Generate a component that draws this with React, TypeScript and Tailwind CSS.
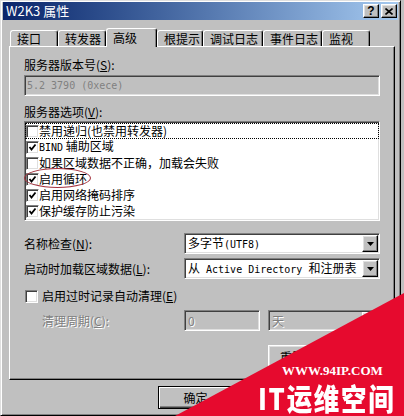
import type { ReactNode } from 'react';

const raised =
  'border border-t-white border-l-white border-r-black border-b-black shadow-[inset_-1px_-1px_0_#808080,inset_1px_1px_0_#dfdfdf]';
const sunken =
  'border border-t-[#808080] border-l-[#808080] border-r-white border-b-white shadow-[inset_1px_1px_0_#404040,inset_-1px_-1px_0_#dfdfdf]';
const mono = "font-['DejaVu_Sans_Mono',monospace] text-[10px] leading-[14px]";
const grayed = 'text-[#808080] [text-shadow:1px_1px_0_#fff]';

function Key({ k }: { k: string }) {
  return (
    <>
      (<span className="underline">{k}</span>)
    </>
  );
}

function CheckBox({ checked }: { checked: boolean }) {
  return (
    <span className={`flex h-[13px] w-[13px] shrink-0 items-center justify-center bg-white ${sunken}`}>
      {checked && (
        <svg width="9" height="9" viewBox="0 0 9 9">
          <polyline points="1.5,4 3.5,6.5 7.5,1.5" fill="none" stroke="#000" strokeWidth="1.8" />
        </svg>
      )}
    </span>
  );
}

function ArrowBtn({ disabled }: { disabled?: boolean }) {
  return (
    <span className={`flex h-[17px] w-[16px] items-center justify-center bg-[#c0c0c0] ${raised}`}>
      <svg width="7" height="4" viewBox="0 0 7 4">
        <polygon points="0,0 7,0 3.5,4" fill={disabled ? '#808080' : '#000'} />
      </svg>
    </span>
  );
}

function Combo({ children, disabled, className = '' }: { children: ReactNode; disabled?: boolean; className?: string }) {
  return (
    <div className={`flex h-[21px] items-center ${sunken} ${disabled ? 'bg-[#c0c0c0]' : 'bg-white'} ${className}`}>
      <div className={`flex-1 whitespace-nowrap pl-[3px] leading-[14px] ${disabled ? grayed : ''}`}>{children}</div>
      <div className="mr-[1px]">
        <ArrowBtn disabled={disabled} />
      </div>
    </div>
  );
}

const tabs = [
  { label: '接口', w: 'w-[48px]' },
  { label: '转发器', w: 'w-[48px]' },
  { label: '高级', w: 'w-[51px]', active: true },
  { label: '根提示', w: 'w-[46px]' },
  { label: '调试日志', w: 'w-[60px]' },
  { label: '事件日志', w: 'w-[59px]' },
  { label: '监视', w: 'w-[48px]' },
];

const options: Array<{ label: ReactNode; checked: boolean }> = [
  { label: '禁用递归(也禁用转发器)', checked: false },
  {
    label: (
      <>
        <span className={mono}>BIND</span> 辅助区域
      </>
    ),
    checked: true,
  },
  { label: '如果区域数据不正确，加载会失败', checked: false },
  { label: '启用循环', checked: true },
  { label: '启用网络掩码排序', checked: true },
  { label: '保护缓存防止污染', checked: true },
];

export default function App() {
  return (
    <div className="relative h-[416px] w-[404px] overflow-hidden bg-[#c0c0c0] font-['Noto_Sans_CJK_SC','Liberation_Sans',sans-serif] text-[12px] text-black">
      <div className="flex h-[416px] w-[401px] flex-col border border-t-[#dfdfdf] border-l-[#dfdfdf] border-r-black border-b-black px-[2px] pt-[1px] shadow-[inset_1px_1px_0_#fff,inset_-1px_-1px_0_#808080]">
        {/* title bar */}
        <div className="flex h-[18px] items-center bg-linear-to-r from-[#0a246a] to-[#a6caf0] pl-[3px] pr-[1px]">
          <span className="text-[13px] leading-[14px] text-white">W2K3 属性</span>
          <div className="ml-auto flex gap-[2px]">
            <span className={`flex h-[14px] w-[16px] items-center justify-center bg-[#c0c0c0] font-['Liberation_Sans',sans-serif] text-[12px] font-bold leading-none ${raised}`}>
              ?
            </span>
            <span className={`flex h-[14px] w-[16px] items-center justify-center bg-[#c0c0c0] ${raised}`}>
              <svg width="8" height="7" viewBox="0 0 8 7">
                <path d="M0.5 0.5 L7.5 6.5 M7.5 0.5 L0.5 6.5" stroke="#000" strokeWidth="1.6" />
              </svg>
            </span>
          </div>
        </div>

        {/* tabs */}
        <div className="mt-[8px] ml-[7px] flex h-[18px] items-end">
          {tabs.map((t) =>
            t.active ? (
              <div
                key={t.label}
                className={`relative z-10 mb-[-1px] h-[19px] ${t.w} rounded-t-[3px] border-x border-t border-t-white border-l-white border-r-black bg-[#c0c0c0] pt-[2px] pl-[6px] leading-[14px] shadow-[inset_-1px_0_0_#808080]`}
              >
                {t.label}
              </div>
            ) : (
              <div
                key={t.label}
                className={`h-[16px] ${t.w} rounded-t-[3px] border-x border-t border-t-white border-l-white border-r-black pt-[1px] pl-[6px] leading-[14px] shadow-[inset_-1px_0_0_#808080]`}
              >
                {t.label}
              </div>
            ),
          )}
        </div>

        {/* panel */}
        <div className="ml-[6px] flex h-[334px] w-[386px] flex-col border border-t-white border-l-white border-r-black border-b-black px-[14px] pt-[11px] shadow-[inset_-1px_-1px_0_#808080]">
          <div className="h-[14px] leading-[14px]">
            服务器版本号<Key k="S" />:
          </div>
          <div className={`mt-[3px] flex h-[21px] items-center pl-[2px] ${sunken}`}>
            <span className={`${mono} text-[#808080]`}>5.2 3790 (0xece)</span>
          </div>

          <div className="mt-[9px] h-[14px] leading-[14px]">
            服务器选项<Key k="V" />:
          </div>
          <div className={`relative mt-[2px] h-[100px] bg-white ${sunken}`}>
            <div className="pt-[1px]">
              {options.map((o, i) => (
                <div
                  key={i}
                  className={`flex h-[16px] items-center leading-[14px] ${i === 0 ? 'outline-1 -outline-offset-1 outline-dotted outline-black' : ''}`}
                >
                  <span className="ml-[1px]">
                    <CheckBox checked={o.checked} />
                  </span>
                  <span>{o.label}</span>
                </div>
              ))}
            </div>
            <div className="absolute top-[46px] left-[-1px] h-[20px] w-[67px] rounded-[50%] border border-[#a3303c]" />
          </div>

          <div className="mt-[12px] flex h-[21px] items-center">
            <span className="w-[160px] leading-[14px]">
              名称检查<Key k="N" />:
            </span>
            <Combo className="flex-1">
              多字节<span className={mono}>(UTF8)</span>
            </Combo>
          </div>
          <div className="mt-[4px] flex h-[21px] items-center">
            <span className="w-[160px] leading-[14px]">
              启动时加载区域数据<Key k="L" />:
            </span>
            <Combo className="flex-1">
              从<span className={mono}> Active Directory </span>和注册表
            </Combo>
          </div>

          <div className="mt-[10px] flex h-[14px] items-center gap-[4px] pl-[1px]">
            <CheckBox checked={false} />
            <span className="leading-[14px]">
              启用过时记录自动清理<Key k="E" />
            </span>
          </div>

          <div className="mt-[7px] flex h-[21px] items-center">
            <span className={`ml-[18px] w-[142px] leading-[14px] ${grayed}`}>
              清理周期<Key k="C" />:
            </span>
            <div className={`flex h-[21px] w-[76px] items-center bg-[#c0c0c0] pl-[3px] leading-[14px] ${sunken} ${grayed}`}>
              0
            </div>
            <Combo disabled className="ml-[8px] flex-1">
              天
            </Combo>
          </div>

          <div className={`mt-[14px] ml-[244px] flex h-[23px] w-[112px] items-center justify-center whitespace-nowrap bg-[#c0c0c0] leading-[14px] ${raised}`}>
            重置为默认值<Key k="R" />
          </div>
        </div>

        {/* dialog buttons */}
        <div className="mt-[6px] ml-[155px] flex">
          <div className="flex h-[23px] w-[75px] items-center justify-center border border-black bg-[#c0c0c0] leading-[14px] shadow-[inset_1px_1px_0_#fff,inset_-1px_-1px_0_#404040,inset_-2px_-2px_0_#808080]">
            确定
          </div>
        </div>
      </div>

      {/* watermark */}
      <svg className="absolute inset-0" width="404" height="416" viewBox="0 0 404 416">
        <polygon points="175,416 404,293 404,416" fill="#e60a2e" />
      </svg>
      <div className="absolute top-[364px] left-[282px] font-['Liberation_Serif',serif] text-[13px] leading-[13px] font-bold text-white">
        WWW.94IP.COM
      </div>
      <div className="absolute top-[382px] left-[258px] origin-left scale-x-[0.85] text-[30px] leading-[30px] font-black tracking-[2px] whitespace-nowrap text-white">
        IT运维空间
      </div>
    </div>
  );
}
